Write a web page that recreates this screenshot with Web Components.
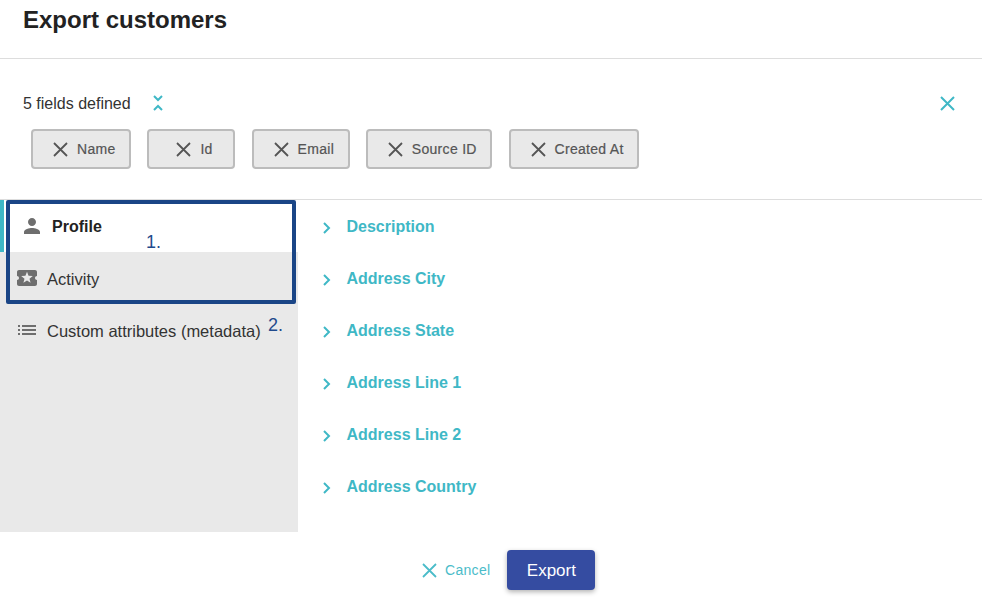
<!DOCTYPE html>
<html>
<head>
<meta charset="utf-8">
<title>Export customers</title>
<style>
    html, body { margin: 0; background: #fff; }
    body { font-family: "Liberation Sans", Arial, sans-serif; color: #222; }
</style>
</head>
<body>
<export-dialog>
    <span slot="title">Export customers</span>
    <span slot="count">5 fields defined</span>

    <field-chip slot="chips">Name</field-chip>
    <field-chip slot="chips">Id</field-chip>
    <field-chip slot="chips">Email</field-chip>
    <field-chip slot="chips">Source ID</field-chip>
    <field-chip slot="chips">Created At</field-chip>

    <nav-item slot="nav" icon="person" active>Profile</nav-item>
    <nav-item slot="nav" icon="activity">Activity</nav-item>
    <nav-item slot="nav" icon="list">Custom attributes (metadata)</nav-item>

    <attr-row slot="rows">Description</attr-row>
    <attr-row slot="rows">Address City</attr-row>
    <attr-row slot="rows">Address State</attr-row>
    <attr-row slot="rows">Address Line 1</attr-row>
    <attr-row slot="rows">Address Line 2</attr-row>
    <attr-row slot="rows">Address Country</attr-row>
</export-dialog>

<script>
const ICONS = {
    person: 'M12 12c2.21 0 4-1.79 4-4s-1.79-4-4-4-4 1.79-4 4 1.79 4 4 4zm0 2c-2.67 0-8 1.34-8 4v2h16v-2c0-2.66-5.33-4-8-4z',
    activity: 'M20 12c0-1.1.9-2 2-2V6c0-1.1-.9-2-2-2H4c-1.1 0-1.99.9-1.99 2v4c1.1 0 1.99.9 1.99 2s-.89 2-2 2v4c0 1.1.9 2 2 2h16c1.1 0 2-.9 2-2v-4c-1.1 0-2-.9-2-2zm-4.42 4.8L12 14.5l-3.58 2.3 1.08-4.12-3.29-2.69 4.24-.25L12 5.8l1.54 3.95 4.24.25-3.29 2.69 1.09 4.11z',
    list: 'M3 13h2v-2H3v2zm0 4h2v-2H3v2zm0-8h2V7H3v2zm4 4h14v-2H7v2zm0 4h14v-2H7v2zM7 7v2h14V7H7z'
};
const CROSS = '<svg width="15" height="15" viewBox="0 0 15 15" fill="none" stroke="currentColor" stroke-width="1.8"><path d="M1 1l13 13M14 1L1 14"/></svg>';

customElements.define('field-chip', class extends HTMLElement {
    connectedCallback() {
        this.attachShadow({ mode: "open" });
        this.shadowRoot.innerHTML = `
            <style>
                :host {
                    display: flex;
                    align-items: center;
                    justify-content: center;
                    gap: 9px;
                    box-sizing: border-box;
                    height: 40px;
                    min-width: 88px;
                    padding: 0 13.5px 0 20px;
                    background: #e9e9e9;
                    border: 2px solid #bcbcbc;
                    border-radius: 4px;
                    color: #555;
                    font-size: 14px;
                    letter-spacing: .3px;
                    -webkit-text-stroke: .2px #555;
                }
                svg { display: block; }
            </style>
            ${CROSS}<slot></slot>
        `
    }
})

customElements.define('nav-item', class extends HTMLElement {
    connectedCallback() {
        this.attachShadow({ mode: "open" });
        this.shadowRoot.innerHTML = `
            <style>
                :host {
                    display: flex;
                    align-items: center;
                    gap: 8px;
                    box-sizing: border-box;
                    height: 52px;
                    padding: 2px 0 0 15px;
                    font-size: 16.5px;
                    color: #333;
                }
                :host([active]) {
                    background: #fff;
                    border-left: 4px solid #3fb8c6;
                    padding-left: 16px;
                    font-size: 16px;
                    font-weight: 700;
                    color: #222;
                }
                svg { display: block; fill: #6e6e6e; flex: none; margin-top: -2px; }
            </style>
            <svg width="24" height="24" viewBox="0 0 24 24"><path d="${ICONS[this.getAttribute('icon')]}"/></svg>
            <slot></slot>
        `
    }
})

customElements.define('attr-row', class extends HTMLElement {
    connectedCallback() {
        this.attachShadow({ mode: "open" });
        this.shadowRoot.innerHTML = `
            <style>
                :host {
                    display: flex;
                    align-items: center;
                    gap: 15.5px;
                    box-sizing: border-box;
                    height: 52px;
                    padding-top: 2px;
                    color: #3fb8c6;
                    font-size: 16px;
                    font-weight: 700;
                }
                svg { display: block; flex: none; margin-top: 1px; }
            </style>
            <svg width="8" height="12" viewBox="0 0 8 12" fill="none" stroke="currentColor" stroke-width="2"><path d="M1 1l5 5-5 5"/></svg>
            <slot></slot>
        `
    }
})

customElements.define('export-dialog', class extends HTMLElement {
    connectedCallback() {
        this.attachShadow({ mode: "open" });
        this.shadowRoot.innerHTML = `
            <style>
                :host {
                    display: flex;
                    flex-direction: column;
                    position: relative;
                    width: 982px;
                    height: 598px;
                    overflow: hidden;
                }
                header {
                    box-sizing: border-box;
                    height: 59px;
                    padding: 6px 23px 0;
                    border-bottom: 1px solid #ddd;
                    font-size: 24px;
                    line-height: 27px;
                    font-weight: 700;
                    color: #222;
                }
                .fields {
                    box-sizing: border-box;
                    height: 141px;
                    padding: 33px 27px 0 23px;
                    border-bottom: 1px solid #ddd;
                }
                .summary {
                    display: flex;
                    align-items: center;
                    height: 22px;
                    font-size: 16px;
                    color: #333;
                }
                .count { padding-top: 2px; }
                .toggle { display: block; margin-left: 22px; color: #3fb8c6; }
                .close { display: block; margin-left: auto; color: #3fb8c6; }
                .chips {
                    display: flex;
                    gap: 16.25px;
                    margin: 15px 0 0 8px;
                }
                .main {
                    display: grid;
                    grid-template-columns: 298px auto;
                    height: 332px;
                }
                .left { background: #e9e9e9; }
                .right { padding-left: 25px; }
                footer {
                    display: flex;
                    align-items: center;
                    flex: 1;
                    padding: 10px 0 0 422px;
                }
                .cancel {
                    display: flex;
                    align-items: center;
                    gap: 8px;
                    color: #4bbcc9;
                    font-size: 14px;
                    letter-spacing: .3px;
                }
                .cancel svg { display: block; }
                .export {
                    box-sizing: border-box;
                    width: 88px;
                    height: 40px;
                    margin-left: 17px;
                    padding-top: 2px;
                    display: flex;
                    align-items: center;
                    justify-content: center;
                    background: #354ca1;
                    color: #fff;
                    border-radius: 4px;
                    box-shadow: 0 2px 5px rgba(0, 0, 0, .3);
                    font-size: 17px;
                }
                .note {
                    position: absolute;
                    box-sizing: border-box;
                    left: 6px;
                    top: 200px;
                    width: 290px;
                    height: 104px;
                    border: 4px solid #1a4586;
                    border-radius: 2px;
                }
                .num {
                    position: absolute;
                    color: #1f4a8c;
                    font-size: 18px;
                    line-height: 20px;
                }
            </style>
            <header><slot name="title"></slot></header>
            <section class="fields">
                <div class="summary">
                    <div class="count"><slot name="count"></slot></div>
                    <svg class="toggle" width="10" height="16" viewBox="0 0 10 16" fill="none" stroke="currentColor" stroke-width="2"><path d="M1 1l4 4 4-4M1 15l4-4 4 4"/></svg>
                    <svg class="close" width="15" height="15" viewBox="0 0 15 15" fill="none" stroke="currentColor" stroke-width="2"><path d="M1 1l13 13M14 1L1 14"/></svg>
                </div>
                <div class="chips"><slot name="chips"></slot></div>
            </section>
            <div class="main">
                <div class="left"><slot name="nav"></slot></div>
                <div class="right"><slot name="rows"></slot></div>
            </div>
            <footer>
                <div class="cancel">${CROSS}<span>Cancel</span></div>
                <div class="export">Export</div>
            </footer>
            <div class="note"></div>
            <div class="num" style="left:146px;top:232px">1.</div>
            <div class="num" style="left:268px;top:315px">2.</div>
        `
    }
})
</script>
</body>
</html>
